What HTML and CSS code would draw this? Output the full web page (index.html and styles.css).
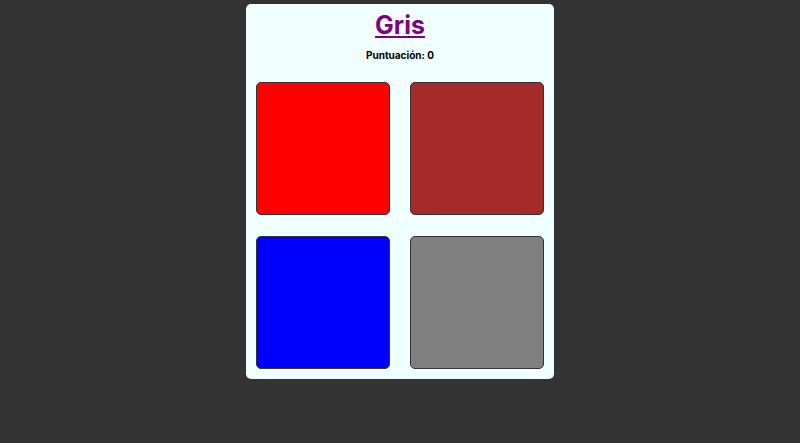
FILE: index.html
```html
<!DOCTYPE html>
<html lang="es">
<head>
<meta charset="utf-8">
<title>Gris</title>
<link rel="stylesheet" href="styles.css">
</head>
<body>
<main class="card">
  <h1 class="title"><a class="title-link" href="#">Gris</a></h1>
  <p class="score">Puntuación: 0</p>
  <div class="grid">
    <div class="tile red"></div>
    <div class="tile brown"></div>
    <div class="tile blue"></div>
    <div class="tile gray"></div>
  </div>
</main>
</body>
</html>
```

FILE: styles.css
```css
html, body {
  margin: 0;
  padding: 0;
  background: #333333;
  font-family: Inter, "Noto Sans", sans-serif;
}
body {
  display: flex;
  justify-content: center;
  padding-top: 4px;
}
.card {
  width: 288px;
  background: #f0ffff;
  border-radius: 5px;
  padding: 4px 10px 10px;
  display: flex;
  flex-direction: column;
  align-items: center;
}
.title {
  margin: 0;
  font-size: 25px;
  line-height: 34px;
  font-weight: 700;
}
.title-link {
  color: #800080;
}
.score {
  margin: 7px 0 0;
  font-size: 10px;
  line-height: 13px;
  font-weight: 700;
  color: #000;
}
.grid {
  margin-top: 20px;
  display: grid;
  grid-template-columns: 134px 134px;
  gap: 21px 20px;
}
.tile {
  box-sizing: border-box;
  width: 134px;
  height: 133px;
  border: 1px solid #333;
  border-radius: 5px;
}
.red { background: #ff0000; }
.brown { background: #a52a2a; }
.blue { background: #0000ff; }
.gray { background: #808080; }
```
